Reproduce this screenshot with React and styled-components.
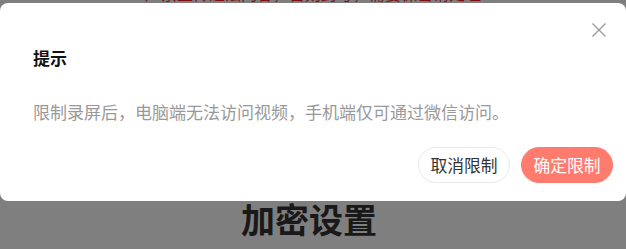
import React from "react";
import styled, { createGlobalStyle } from "styled-components";

const GlobalStyle = createGlobalStyle`
  html, body {
    margin: 0;
    padding: 0;
    background: #fff;
    font-family: "Noto Sans CJK SC", "Noto Sans", sans-serif;
  }
`;

const Page = styled.div`
  position: relative;
  width: 626px;
  height: 249px;
  overflow: hidden;
  background: #fff;
`;

const Notice = styled.div`
  margin-top: -15px;
  text-align: center;
  font-size: 16px;
  line-height: 16px;
  color: #ff1a1a;
`;

const Heading = styled.h1`
  margin: 198px 0 0;
  text-align: center;
  font-size: 34px;
  line-height: 40px;
  font-weight: 700;
  color: #333;
  padding-right: 8px;
`;

const Mask = styled.div`
  position: absolute;
  inset: 0;
  background: rgba(0, 0, 0, 0.5);
`;

const Dialog = styled.div`
  position: absolute;
  top: 3px;
  left: 0;
  width: 626px;
  box-sizing: border-box;
  background: #fff;
  border-radius: 8px;
  padding: 46px 13px 18px 33px;
  display: flex;
  flex-direction: column;
`;

const Close = styled.button`
  position: absolute;
  top: 20px;
  right: 20px;
  width: 14px;
  height: 14px;
  padding: 0;
  border: none;
  background: none;
  cursor: pointer;
  display: flex;
`;

const Title = styled.div`
  font-size: 17px;
  line-height: 17px;
  font-weight: 700;
  color: #111;
`;

const Message = styled.div`
  margin-top: 37px;
  font-size: 17px;
  line-height: 17px;
  color: #999;
  white-space: nowrap;
`;

const Actions = styled.div`
  margin-top: 27px;
  display: flex;
  justify-content: flex-end;
  gap: 11px;
`;

const Button = styled.button`
  height: 36px;
  width: 92px;
  padding: 0;
  box-sizing: border-box;
  border-radius: 18px;
  font-family: inherit;
  font-size: 16.8px;
  line-height: 1;
  cursor: pointer;
  border: 1px solid ${({ $primary }) => ($primary ? "#ff7b6d" : "#e8e8e8")};
  background: ${({ $primary }) => ($primary ? "#ff7b6d" : "#fff")};
  color: ${({ $primary }) => ($primary ? "#fff" : "#333")};
`;

export default function App() {
  return (
    <Page>
      <GlobalStyle />
      <Notice>严禁上传违法内容，否则封号，需要保密请处理</Notice>
      <Heading>加密设置</Heading>
      <Mask />
      <Dialog>
        <Close aria-label="关闭">
          <svg width="14" height="14" viewBox="0 0 14 14">
            <path d="M0.5 0.5 L13.5 13.5 M13.5 0.5 L0.5 13.5" stroke="#999" strokeWidth="1.3" fill="none" />
          </svg>
        </Close>
        <Title>提示</Title>
        <Message>限制录屏后，电脑端无法访问视频，手机端仅可通过微信访问。</Message>
        <Actions>
          <Button>取消限制</Button>
          <Button $primary>确定限制</Button>
        </Actions>
      </Dialog>
    </Page>
  );
}
